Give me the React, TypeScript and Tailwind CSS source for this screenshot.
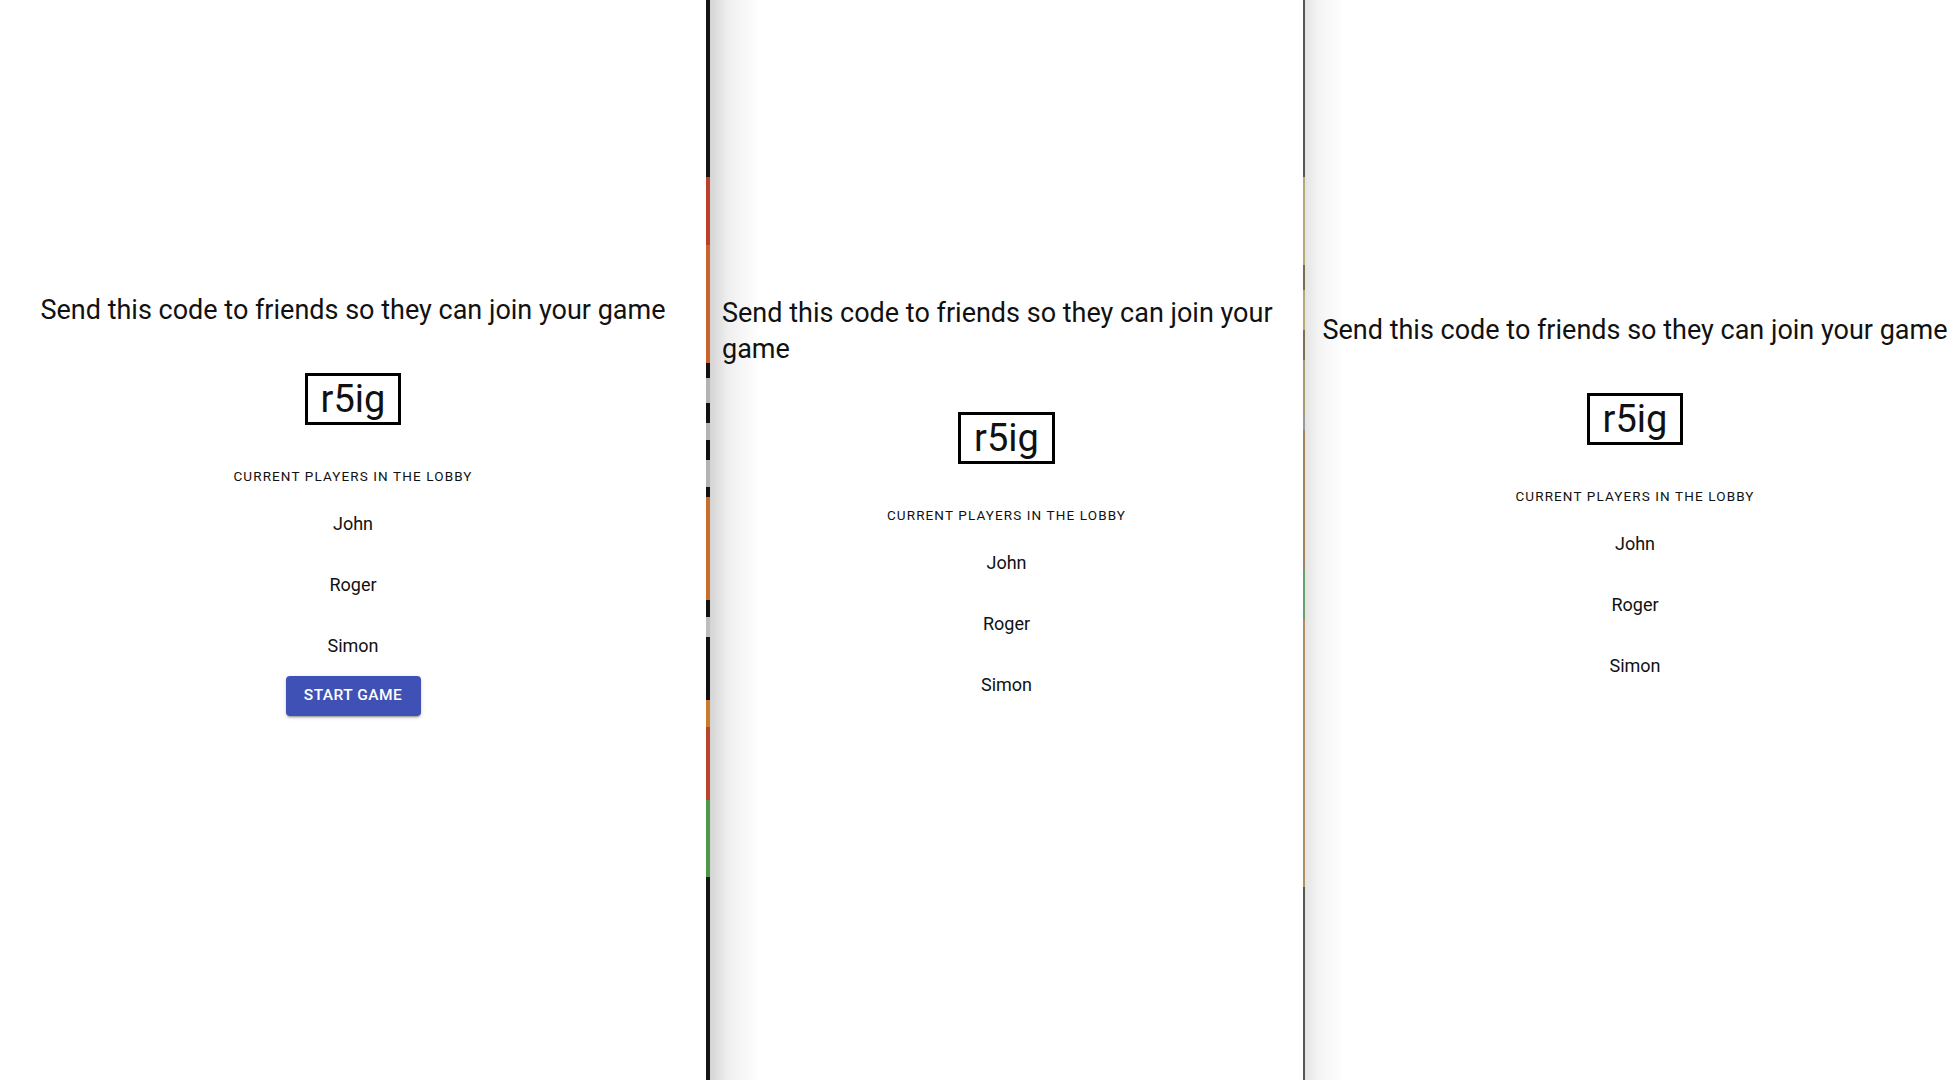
const players = ['John', 'Roger', 'Simon']

// colored slivers between the phone screenshots: [height, color]
const leftEdge: [number, string][] = [
  [177, '#141414'],
  [68, '#bd3e29'],
  [118, '#c9622b'],
  [15, '#111111'],
  [25, '#b3b3b3'],
  [20, '#111111'],
  [17, '#b3b3b3'],
  [20, '#111111'],
  [27, '#b3b3b3'],
  [10, '#111111'],
  [103, '#c86e2d'],
  [17, '#111111'],
  [20, '#bdbdbd'],
  [63, '#111111'],
  [27, '#c97a2a'],
  [73, '#b8452a'],
  [77, '#4b9a48'],
  [203, '#141414'],
]

const rightEdge: [number, string][] = [
  [177, '#555555'],
  [88, '#b8a878'],
  [25, '#7a6a50'],
  [40, '#b8a878'],
  [30, '#806c52'],
  [53, '#a89a70'],
  [17, '#9a9a9a'],
  [140, '#a08262'],
  [50, '#6aa070'],
  [267, '#b09062'],
  [193, '#555555'],
]

const Strip = ({ parts, w }: { parts: [number, string][]; w: string }) => {
  return (
    <div className={`flex flex-col shrink-0 ${w}`}>
      {parts.map(([h, c], i) => (
        <div key={i} style={{ height: h, background: c }} />
      ))}
    </div>
  )
}

const Lobby = ({ showButton }: { showButton: boolean }) => {
  return (
    <>
      <h5 className="text-left text-[27px] leading-[36px] text-[#111]">
        Send this code to friends so they can join your game
      </h5>
      <div className="mt-[45px] border-[3px] border-black px-[13px] text-[38px] leading-[46px] text-[#111]">
        r5ig
      </div>
      <p className="mt-[34px] text-[13.5px] leading-[34px] uppercase tracking-[0.083em] text-[#111]">
        Current players in the lobby
      </p>
      <ul className="flex flex-col items-center">
        {players.map((p) => (
          <li key={p} className="text-[18px] leading-[61px] text-[#111]">
            {p}
          </li>
        ))}
      </ul>
      {showButton && (
        <button className="w-[135px] h-[40px] rounded-[4px] bg-[#3f51b5] text-white text-[15.5px] font-medium uppercase tracking-[0.03em] shadow-[0_3px_1px_-2px_rgba(0,0,0,0.2),0_2px_2px_0_rgba(0,0,0,0.14),0_1px_5px_0_rgba(0,0,0,0.12)]">
          Start game
        </button>
      )}
    </>
  )
}

export default function App() {
  return (
    <div className="flex w-[1955px] h-[1080px] overflow-hidden bg-white font-['Roboto','Liberation_Sans',sans-serif]">
      <div className="w-[706px] shrink-0 flex flex-col items-center px-3 pt-[292px]">
        <Lobby showButton={true} />
      </div>
      <Strip parts={leftEdge} w="w-[4px]" />
      <div className="w-[593px] shrink-0 flex flex-col items-center px-3 pt-[295px] bg-[linear-gradient(to_right,#d4d4d4,#efefef_18px,#ffffff_50px)]">
        <Lobby showButton={false} />
      </div>
      <Strip parts={rightEdge} w="w-[2px]" />
      <div className="w-[660px] shrink-0 flex flex-col items-center px-3 pt-[312px] bg-[linear-gradient(to_right,#e4e4e4,#f4f4f4_14px,#ffffff_40px)]">
        <Lobby showButton={false} />
      </div>
    </div>
  )
}
